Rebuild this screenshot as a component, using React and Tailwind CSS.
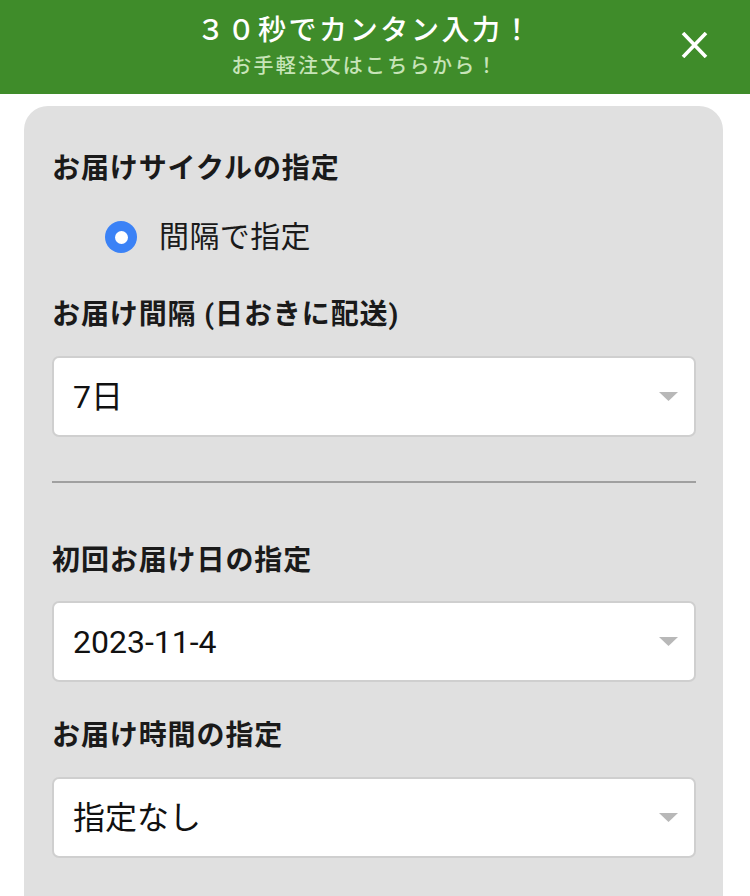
import React from 'react';

const FONT = { fontFamily: 'Roboto, "Noto Sans CJK JP", sans-serif' };

function Caret() {
  return (
    <svg width="19" height="9" viewBox="0 0 19 9" className="shrink-0">
      <path d="M0 0 H19 L9.5 9 Z" fill="#b8b8b8" />
    </svg>
  );
}

function SelectBox({ value }) {
  return (
    <div className="flex h-[81px] items-center justify-between rounded-[7px] border-2 border-[#cfcfcf] bg-white pl-[19px] pr-[16px]">
      <span className="text-[32px] leading-none text-[#111]">{value}</span>
      <Caret />
    </div>
  );
}

function Label({ children, className = '' }) {
  return (
    <h2 className={`text-[28px] font-bold leading-[40px] tracking-[0.9px] text-[#1a1a1a] ${className}`}>{children}</h2>
  );
}

export default function App() {
  return (
    <div className="min-h-[896px] bg-white" style={FONT}>
      {/* Banner */}
      <div className="relative flex h-[94px] flex-col items-center bg-[#3f8c2a] pr-[20px]">
        <p className="mt-[11px] text-[28px] font-medium leading-[40px] tracking-[2.6px] text-white">３０秒でカンタン入力！</p>
        <p className="mt-[1px] text-[20px] font-medium leading-[28px] tracking-[2.3px] text-[#c7e4b8]">お手軽注文はこちらから！</p>
        <button className="absolute right-[42px] top-[32px]" aria-label="close">
          <svg width="27" height="26" viewBox="0 0 27 26">
            <path d="M2 1 L25 25 M25 1 L2 25" stroke="white" strokeWidth="3.6" strokeLinecap="butt" />
          </svg>
        </button>
      </div>

      {/* Form panel */}
      <div className="mx-[24px] mt-[12px] w-[699px] rounded-t-[24px] bg-[#e0e0e0] pb-[40px] pl-[28px] pr-[27px] pt-[43px]">
        <Label>お届けサイクルの指定</Label>

        <label className="mt-[28px] flex h-[40px] items-center pl-[53px]">
          <span className="flex h-[32px] w-[32px] items-center justify-center rounded-full bg-[#3b82f6]">
            <span className="h-[13px] w-[13px] rounded-full bg-white" />
          </span>
          <span className="ml-[22px] text-[30px] leading-none tracking-[0.4px] text-[#1a1a1a]">間隔で指定</span>
        </label>

        <Label className="mt-[38px]">お届け間隔 (日おきに配送)</Label>
        <div className="mt-[21px]">
          <SelectBox value="7日" />
        </div>

        <div className="mt-[44px] h-[2px] bg-[#a0a0a0]" />

        <Label className="mt-[58px]">初回お届け日の指定</Label>
        <div className="mt-[20px]">
          <SelectBox value="2023-11-4" />
        </div>

        <Label className="mt-[34px]">お届け時間の指定</Label>
        <div className="mt-[21px]">
          <SelectBox value="指定なし" />
        </div>
      </div>
    </div>
  );
}
